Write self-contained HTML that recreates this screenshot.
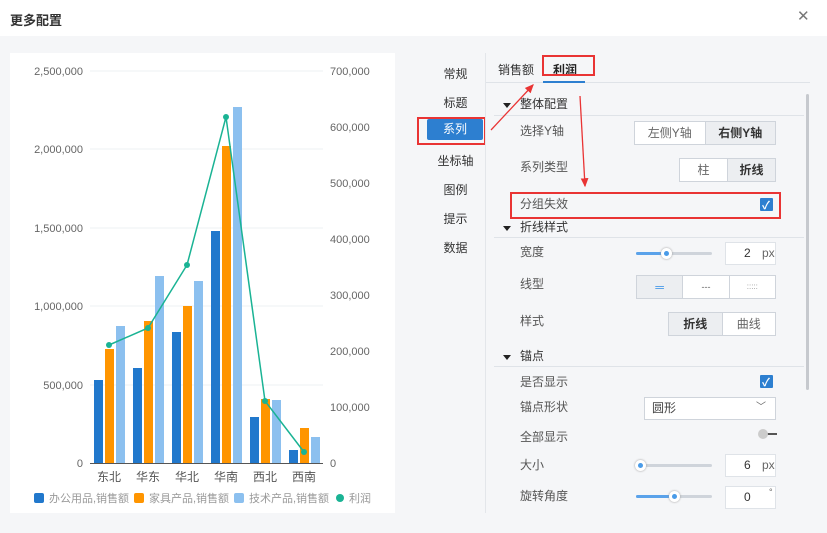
<!DOCTYPE html>
<html><head><meta charset="utf-8"><style>
*{margin:0;padding:0;box-sizing:border-box}
body{width:827px;height:533px;overflow:hidden;background:#f5f6f8;font-family:"Liberation Sans","Noto Sans CJK SC",sans-serif;font-size:12px;color:#333;position:relative}
.a{position:absolute;white-space:nowrap}
.lbl{position:absolute;font-size:12px;color:#333;line-height:14px}
.grp{position:absolute;display:flex;border:1px solid #cfd4db;background:#fff}
.grp div{flex:1;text-align:center;line-height:22px;color:#666;border-left:1px solid #cfd4db}
.grp div:first-child{border-left:none}
.grp .s{background:#eceef1;color:#333;font-weight:bold}
.sec{position:absolute;left:494px;width:310px;border-bottom:1px solid #dfe3e8;height:14px}
.tri{position:absolute;left:503px;width:0;height:0;border-left:4px solid transparent;border-right:4px solid transparent;border-top:5px solid #222}
.cb{position:absolute;width:13px;height:13px;background:#2d7fd0;border-radius:1px}
.inp{position:absolute;background:#fff;border:1px solid #dfe3e8;height:23px;width:51px;line-height:21px;font-size:12px}
.track{position:absolute;height:3px;background:#cfd4db;border-radius:2px}
.fill{position:absolute;height:3px;background:#5aa2ea;border-radius:2px}
.knob{position:absolute;width:11px;height:11px;border-radius:50%;background:#fff;box-shadow:0 0 2px #999}
.knob::after{content:"";position:absolute;left:3px;top:3px;width:5px;height:5px;border-radius:50%;background:#4a9be8}
.nav{position:absolute;left:427px;width:57px;text-align:center;font-size:12px;color:#333}
</style></head><body>
<div class="a" style="left:0;top:0;width:827px;height:36px;background:#fff"></div>
<div class="a" style="left:10px;top:10px;font-size:13px;font-weight:600;color:#333">更多配置</div>
<div class="a" style="left:797px;top:7px;font-size:15px;color:#777;font-weight:300">✕</div>

<div class="a" style="left:10px;top:53px;width:385px;height:460px;background:#fff"></div>
<svg class="a" style="left:0;top:0" width="400" height="520" font-family="Liberation Sans,Noto Sans CJK SC,sans-serif" font-size="11">
<g stroke="#eef0f3"><line x1="90" y1="71" x2="323" y2="71"/><line x1="90" y1="149" x2="323" y2="149"/><line x1="90" y1="228" x2="323" y2="228"/><line x1="90" y1="306" x2="323" y2="306"/><line x1="90" y1="385" x2="323" y2="385"/></g>
<g fill="#666" text-anchor="end"><text x="83" y="75">2,500,000</text><text x="83" y="153">2,000,000</text><text x="83" y="232">1,500,000</text><text x="83" y="310">1,000,000</text><text x="83" y="389">500,000</text><text x="83" y="467">0</text></g>
<g fill="#666"><text x="330" y="75">700,000</text><text x="330" y="131">600,000</text><text x="330" y="187">500,000</text><text x="330" y="243">400,000</text><text x="330" y="299">300,000</text><text x="330" y="355">200,000</text><text x="330" y="411">100,000</text><text x="330" y="467">0</text></g>
<g fill="#2178cc"><rect x="94" y="380" width="9" height="83"/><rect x="133" y="368" width="9" height="95"/><rect x="172" y="332" width="9" height="131"/><rect x="211" y="231" width="9" height="232"/><rect x="250" y="417" width="9" height="46"/><rect x="289" y="450" width="9" height="13"/></g>
<g fill="#ff9500"><rect x="105" y="349" width="9" height="114"/><rect x="144" y="321" width="9" height="142"/><rect x="183" y="306" width="9" height="157"/><rect x="222" y="146" width="9" height="317"/><rect x="261" y="399" width="9" height="64"/><rect x="300" y="428" width="9" height="35"/></g>
<g fill="#8cc0ef"><rect x="116" y="326" width="9" height="137"/><rect x="155" y="276" width="9" height="187"/><rect x="194" y="281" width="9" height="182"/><rect x="233" y="107" width="9" height="356"/><rect x="272" y="400" width="9" height="63"/><rect x="311" y="437" width="9" height="26"/></g>
<line x1="90" y1="463.5" x2="323" y2="463.5" stroke="#555"/>
<polyline points="109,345 148,328 187,265 226,117 265,401 304,452" fill="none" stroke="#1ab394" stroke-width="1.5"/>
<g fill="#1ab394"><circle cx="109" cy="345" r="3"/><circle cx="148" cy="328" r="3"/><circle cx="187" cy="265" r="3"/><circle cx="226" cy="117" r="3"/><circle cx="265" cy="401" r="3"/><circle cx="304" cy="452" r="3"/></g>
<g fill="#555" text-anchor="middle" font-size="12"><text x="109" y="481">东北</text><text x="148" y="481">华东</text><text x="187" y="481">华北</text><text x="226" y="481">华南</text><text x="265" y="481">西北</text><text x="304" y="481">西南</text></g>
<g font-size="11" fill="#999"><rect x="34" y="493" width="10" height="10" rx="2" fill="#2178cc"/><text x="49" y="502">办公用品,销售额</text>
<rect x="134" y="493" width="10" height="10" rx="2" fill="#ff9500"/><text x="149" y="502">家具产品,销售额</text>
<rect x="234" y="493" width="10" height="10" rx="2" fill="#8cc0ef"/><text x="249" y="502">技术产品,销售额</text>
<circle cx="340" cy="498" r="4" fill="#1ab394"/><text x="349" y="502">利润</text></g>
</svg>

<div class="nav" style="top:65px">常规</div>
<div class="nav" style="top:94px">标题</div>
<div class="a" style="left:427px;top:119px;width:56px;height:21px;background:#2d7fd0;color:#fff;text-align:center;line-height:21px;border-radius:2px">系列</div>
<div class="a" style="left:417px;top:117px;width:69px;height:28px;border:2px solid #e93434"></div>
<div class="nav" style="top:152px">坐标轴</div>
<div class="nav" style="top:181px">图例</div>
<div class="nav" style="top:210px">提示</div>
<div class="nav" style="top:239px">数据</div>
<div class="a" style="left:485px;top:53px;width:1px;height:460px;background:#e3e6ea"></div>

<div class="a" style="left:498px;top:61px;color:#333">销售额</div>
<div class="a" style="left:553px;top:61px;font-weight:bold;color:#222">利润</div>
<div class="a" style="left:486px;top:82px;width:324px;height:1px;background:#dfe3e8"></div>
<div class="a" style="left:543px;top:81px;width:42px;height:2px;background:#2d7fd0"></div>
<div class="a" style="left:542px;top:55px;width:53px;height:21px;border:2px solid #e93434"></div>
<div class="a" style="left:806px;top:94px;width:3px;height:296px;background:#c6c9ce;border-radius:2px"></div>

<div class="tri" style="top:103px"></div><div class="lbl" style="left:520px;top:97px">整体配置</div><div class="sec" style="top:102px"></div>
<div class="lbl" style="left:520px;top:124px;color:#555">选择Y轴</div>
<div class="grp" style="left:634px;top:121px;width:142px;height:24px"><div>左侧Y轴</div><div class="s">右侧Y轴</div></div>
<div class="lbl" style="left:520px;top:160px;color:#555">系列类型</div>
<div class="grp" style="left:679px;top:158px;width:97px;height:24px"><div>柱</div><div class="s">折线</div></div>
<div class="lbl" style="left:520px;top:197px;color:#555">分组失效</div>
<div class="cb" style="left:760px;top:198px"></div><div class="a" style="left:762px;top:197px;color:#fff;font-size:11px;font-weight:bold">✓</div>
<div class="a" style="left:510px;top:192px;width:271px;height:27px;border:2px solid #e93434"></div>

<div class="tri" style="top:226px"></div><div class="lbl" style="left:520px;top:220px">折线样式</div><div class="sec" style="top:224px"></div>
<div class="lbl" style="left:520px;top:245px;color:#555">宽度</div>
<div class="track" style="left:636px;top:252px;width:76px"></div><div class="fill" style="left:636px;top:252px;width:30px"></div><div class="knob" style="left:661px;top:248px"></div>
<div class="inp" style="left:725px;top:242px"><span style="position:absolute;left:18px">2</span><span style="position:absolute;left:36px;color:#666">px</span></div>
<div class="lbl" style="left:520px;top:277px;color:#555">线型</div>
<div class="grp" style="left:636px;top:275px;width:140px;height:24px"><div class="s" style="color:#4a9be8;font-weight:normal">═</div><div style="font-size:9px">---</div><div style="font-size:8px;color:#999">:::::</div></div>
<div class="lbl" style="left:520px;top:314px;color:#555">样式</div>
<div class="grp" style="left:668px;top:312px;width:108px;height:24px"><div class="s">折线</div><div>曲线</div></div>

<div class="tri" style="top:355px"></div><div class="lbl" style="left:520px;top:349px">锚点</div><div class="sec" style="top:353px"></div>
<div class="lbl" style="left:520px;top:375px;color:#555">是否显示</div>
<div class="cb" style="left:760px;top:375px"></div><div class="a" style="left:762px;top:374px;color:#fff;font-size:11px;font-weight:bold">✓</div>
<div class="lbl" style="left:520px;top:400px;color:#555">锚点形状</div>
<div class="a" style="left:644px;top:397px;width:132px;height:23px;background:#fff;border:1px solid #cfd4db;line-height:21px;padding-left:7px;color:#444">圆形<span style="position:absolute;right:9px;top:-1px;color:#666;font-size:10px">﹀</span></div>
<div class="lbl" style="left:520px;top:430px;color:#555">全部显示</div>
<div class="a" style="left:766px;top:433px;width:11px;height:2px;background:#555"></div><div class="a" style="left:758px;top:429px;width:10px;height:10px;border-radius:50%;background:#ccc"></div>
<div class="lbl" style="left:520px;top:458px;color:#555">大小</div>
<div class="track" style="left:636px;top:464px;width:76px"></div><div class="knob" style="left:635px;top:460px"></div>
<div class="inp" style="left:725px;top:454px"><span style="position:absolute;left:18px">6</span><span style="position:absolute;left:36px;color:#666">px</span></div>
<div class="lbl" style="left:520px;top:489px;color:#555">旋转角度</div>
<div class="track" style="left:636px;top:495px;width:76px"></div><div class="fill" style="left:636px;top:495px;width:38px"></div><div class="knob" style="left:669px;top:491px"></div>
<div class="inp" style="left:725px;top:486px"><span style="position:absolute;left:18px">0</span><span style="position:absolute;left:43px;top:-5px;color:#666;font-size:9px">°</span></div>

<svg class="a" style="left:0;top:0" width="827" height="533">
<defs><marker id="m" markerWidth="8" markerHeight="8" refX="6" refY="4" orient="auto"><path d="M0,1 L7,4 L0,7 Z" fill="#e93434"/></marker></defs>
<line x1="491" y1="130" x2="533" y2="85" stroke="#e93434" stroke-width="1.3" marker-end="url(#m)"/>
<line x1="580" y1="96" x2="585" y2="186" stroke="#e93434" stroke-width="1.3" marker-end="url(#m)"/>
</svg>
</body></html>
